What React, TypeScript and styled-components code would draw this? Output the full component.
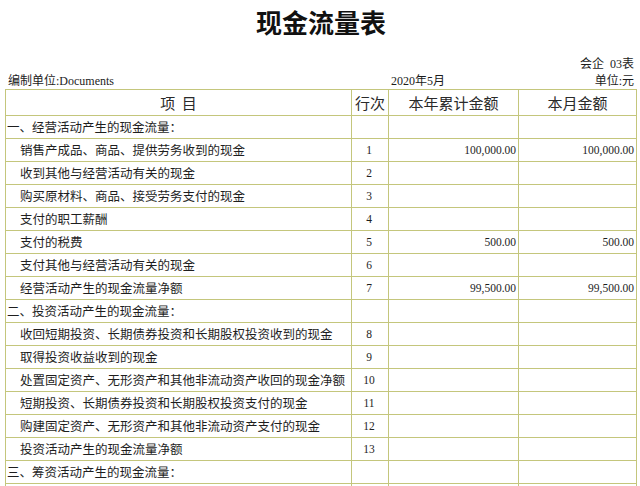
import React from "react";
import styled, { createGlobalStyle } from "styled-components";

const GlobalStyle = createGlobalStyle`
  html, body {
    margin: 0;
    padding: 0;
    background: #ffffff;
    overflow: hidden;
  }
  body {
    font-family: "Liberation Serif", "Noto Sans CJK SC", serif;
    color: #1c1c1c;
  }
`;

const LINE = "#c4c67c";

const Page = styled.div`
  width: 640px;
  height: 486px;
  overflow: hidden;
  background: #ffffff;
`;

const Title = styled.h1`
  margin: 0;
  height: 44px;
  line-height: 44px;
  text-align: center;
  font-family: "Noto Sans CJK SC", sans-serif;
  font-size: 26px;
  font-weight: 700;
  color: #111;
  padding-left: 2px;
`;

const FormCode = styled.div`
  margin-top: 13px;
  height: 14px;
  line-height: 14px;
  padding-right: 6px;
  text-align: right;
  font-size: 12px;
  font-family: "Liberation Serif", "Noto Sans CJK SC", serif;
`;

const InfoLine = styled.div`
  margin-top: 3px;
  height: 14px;
  line-height: 14px;
  display: grid;
  grid-template-columns: 383px 1fr auto;
  padding: 0 6px 0 8px;
  font-size: 12px;
  font-family: "Liberation Serif", "Noto Sans CJK SC", serif;
`;

const Table = styled.div`
  margin: 1px 0 0 5px;
  width: 632px;
  box-sizing: border-box;
  border-left: 1px solid ${LINE};
  border-top: 1px solid ${LINE};
`;

const Row = styled.div<{ $head?: boolean }>`
  display: grid;
  grid-template-columns: 346px 37px 130px 118px;
  height: ${(p) => (p.$head ? 26 : 23)}px;
`;

const Cell = styled.div<{ $align?: "left" | "center" | "right"; $indent?: number }>`
  box-sizing: border-box;
  border-right: 1px solid ${LINE};
  border-bottom: 1px solid ${LINE};
  display: flex;
  align-items: center;
  justify-content: ${(p) =>
    p.$align === "center" ? "center" : p.$align === "right" ? "flex-end" : "flex-start"};
  padding: 0 2px 1px ${(p) => p.$indent ?? 0}px;
  overflow: hidden;
  white-space: nowrap;
`;

const HeadCell = styled(Cell)`
  font-family: "Noto Sans CJK SC", sans-serif;
  font-size: 15px;
  color: #2a2a2a;
  padding: 0 0 1px 0;
`;

const Label = styled.span`
  font-family: "Noto Sans CJK SC", sans-serif;
  font-size: 12.5px;
  color: #1e1e1e;
`;

const Num = styled.span`
  font-family: "Liberation Serif", serif;
  font-size: 11.5px;
  color: #1e1e1e;
`;

type Item = {
  label: string;
  section?: boolean;
  no?: number;
  year?: string;
  month?: string;
};

const rows: Item[] = [
  { label: "一、经营活动产生的现金流量：", section: true },
  { label: "销售产成品、商品、提供劳务收到的现金", no: 1, year: "100,000.00", month: "100,000.00" },
  { label: "收到其他与经营活动有关的现金", no: 2 },
  { label: "购买原材料、商品、接受劳务支付的现金", no: 3 },
  { label: "支付的职工薪酬", no: 4 },
  { label: "支付的税费", no: 5, year: "500.00", month: "500.00" },
  { label: "支付其他与经营活动有关的现金", no: 6 },
  { label: "经营活动产生的现金流量净额", no: 7, year: "99,500.00", month: "99,500.00" },
  { label: "二、投资活动产生的现金流量：", section: true },
  { label: "收回短期投资、长期债券投资和长期股权投资收到的现金", no: 8 },
  { label: "取得投资收益收到的现金", no: 9 },
  { label: "处置固定资产、无形资产和其他非流动资产收回的现金净额", no: 10 },
  { label: "短期投资、长期债券投资和长期股权投资支付的现金", no: 11 },
  { label: "购建固定资产、无形资产和其他非流动资产支付的现金", no: 12 },
  { label: "投资活动产生的现金流量净额", no: 13 },
  { label: "三、筹资活动产生的现金流量：", section: true },
  { label: "" },
];

export default function App() {
  return (
    <Page>
      <GlobalStyle />
      <Title>现金流量表</Title>
      <FormCode>会企&nbsp;&nbsp;03表</FormCode>
      <InfoLine>
        <span>编制单位:Documents</span>
        <span>2020年5月</span>
        <span>单位:元</span>
      </InfoLine>
      <Table>
        <Row $head>
          <HeadCell $align="center">项&nbsp;&nbsp;目</HeadCell>
          <HeadCell $align="center">行次</HeadCell>
          <HeadCell $align="center">本年累计金额</HeadCell>
          <HeadCell $align="center">本月金额</HeadCell>
        </Row>
        {rows.map((r, i) => (
          <Row key={i}>
            <Cell $indent={r.section ? 1 : 14}>
              {r.label && <Label>{r.label}</Label>}
            </Cell>
            <Cell $align="center">{r.no !== undefined && <Num>{r.no}</Num>}</Cell>
            <Cell $align="right">{r.year && <Num>{r.year}</Num>}</Cell>
            <Cell $align="right">{r.month && <Num>{r.month}</Num>}</Cell>
          </Row>
        ))}
      </Table>
    </Page>
  );
}
